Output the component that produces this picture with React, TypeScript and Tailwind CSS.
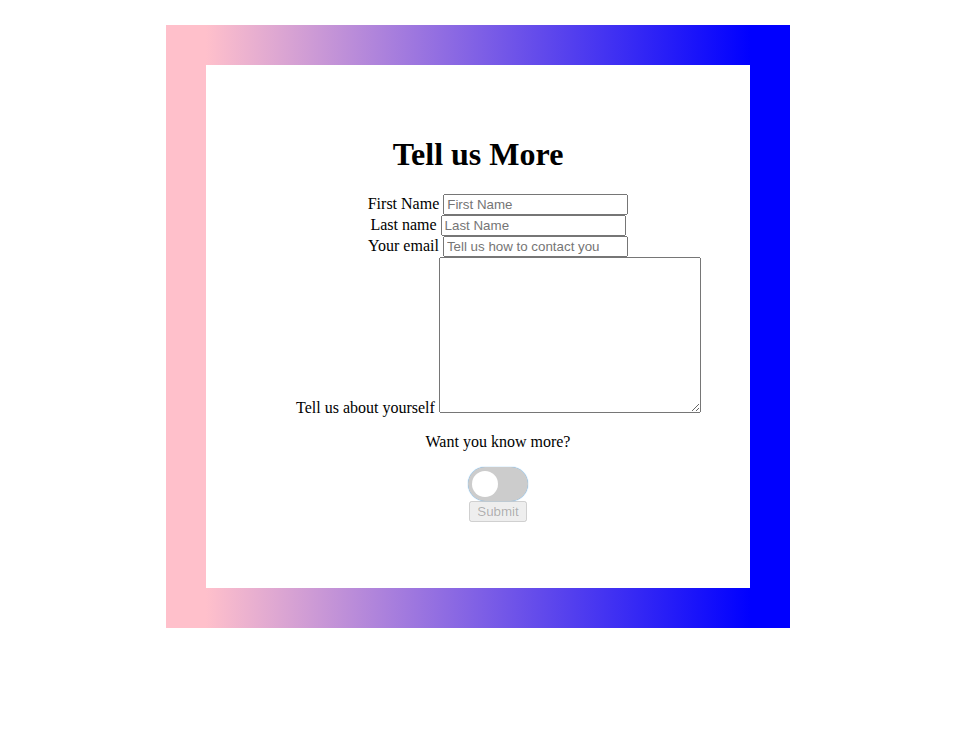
import React from "react";

type TextFieldProps = {
  id: string;
  label: string;
  type: string;
  placeholder: string;
};

function TextField({ id, label, type, placeholder }: TextFieldProps) {
  return (
    <div>
      <label htmlFor={id}>{label}</label>{" "}
      <input
        id={id}
        type={type}
        placeholder={placeholder}
        className="[all:revert] placeholder:text-[#757575]"
      />
    </div>
  );
}

function Toggle() {
  return (
    <label className="relative block h-[34px] w-[60px] cursor-pointer">
      <input type="checkbox" aria-label="Want you know more?" className="peer sr-only" />
      <span className="absolute inset-0 rounded-full bg-[#cccccc] shadow-[0_0_1px_#2196f3] transition peer-checked:bg-[#2196f3]" />
      <span className="absolute bottom-1 left-1 size-[26px] rounded-full bg-white transition peer-checked:translate-x-[26px]" />
    </label>
  );
}

export default function App() {
  return (
    <main className="bg-white pt-[25px] pr-[15px] font-['Liberation_Serif',serif] text-base leading-normal text-black">
      <div className="mx-auto w-full max-w-[624px] bg-[linear-gradient(to_right,pink_40px,blue_calc(100%-40px))] p-10">
        <section className="bg-white p-[50px] text-center">
          <h1 className="my-[21px] text-[32px] leading-[37px] font-bold">Tell us More</h1>
          <form className="pb-4 pl-10 leading-[18px]" onSubmit={(e) => e.preventDefault()}>
            <TextField id="first-name" label="First Name" type="text" placeholder="First Name" />
            <TextField id="last-name" label="Last name" type="text" placeholder="Last Name" />
            <TextField id="email" label="Your email" type="email" placeholder="Tell us how to contact you" />
            <div className="sm:whitespace-nowrap">
              <label htmlFor="about">Tell us about yourself</label>{" "}
              <textarea id="about" rows={10} cols={30} className="[all:revert]" />
            </div>
            <p className="my-4">Want you know more?</p>
            <div className="flex flex-col items-center">
              <Toggle />
              <button type="submit" disabled className="[all:revert]">
                Submit
              </button>
            </div>
          </form>
        </section>
      </div>
    </main>
  );
}
